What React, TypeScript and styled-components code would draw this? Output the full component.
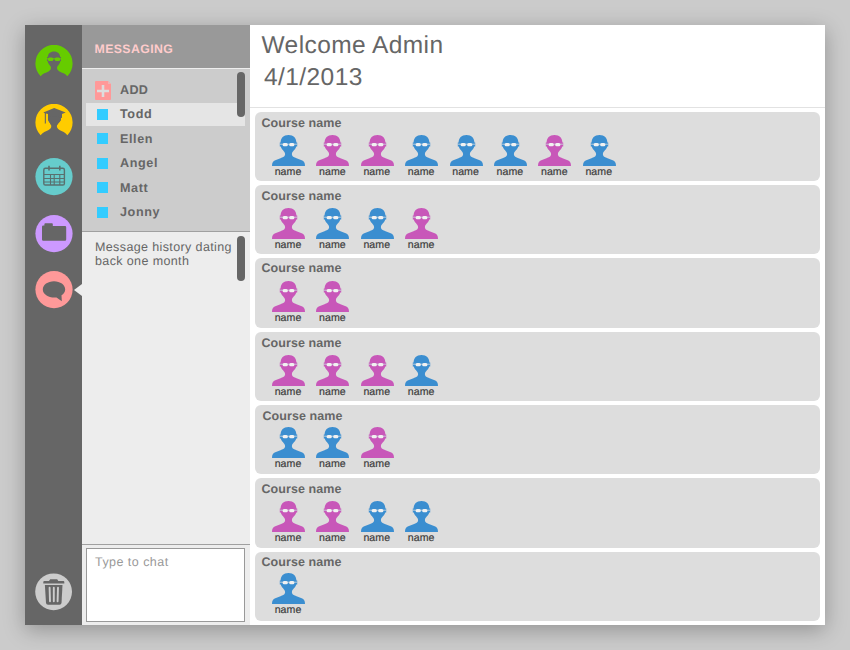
import React from "react";
import styled, { createGlobalStyle } from "styled-components";

const GlobalStyle = createGlobalStyle`
  * { box-sizing: border-box; }
  body {
    margin: 0;
    background: #cbcbcb;
    font-family: "Liberation Sans", Arial, sans-serif;
    color: #666;
    text-rendering: geometricPrecision;
  }
`;

const Page = styled.div`
  width: 850px;
  height: 650px;
  padding: 25px;
  overflow: hidden;
`;

const Window = styled.div`
  display: flex;
  width: 800px;
  height: 600px;
  background: #fff;
  box-shadow: 0 5px 20px rgba(0, 0, 0, 0.28);
`;

const Sidebar = styled.nav`
  position: relative;
  display: flex;
  flex-direction: column;
  width: 57px;
  padding: 19.5px 0 14.5px 10px;
  background: #666;
`;

const NavItem = styled.a<{ $gap: number; $push?: boolean }>`
  display: block;
  width: 38px;
  height: 38px;
  margin-top: ${(p) => (p.$push ? "auto" : `${p.$gap}px`)};
  svg { display: block; }
`;

const ActivePointer = styled.span`
  position: absolute;
  right: 0;
  top: 259px;
  border: 6px solid transparent;
  border-right: 8px solid #ededed;
  border-left: 0;
`;

const Messaging = styled.aside`
  display: flex;
  flex-direction: column;
  width: 168px;
  background: #ededed;
`;

const PanelHeader = styled.h2`
  height: 44px;
  margin: 0;
  padding: 17px 0 0 12.5px;
  background: #999;
  border-bottom: 1px solid #eee;
  color: #fcc;
  font-size: 12.3px;
  line-height: 14px;
  letter-spacing: 0.4px;
`;

const Contacts = styled.div`
  position: relative;
  height: 163px;
  padding: 9.5px 5px 0 4px;
  background: #ccc;
  border-bottom: 1px solid #a0a0a0;
`;

const Contact = styled.div<{ $selected?: boolean }>`
  display: flex;
  align-items: center;
  height: 24.4px;
  padding: 0 0 1.2px 11px;
  font-size: 12.6px;
  font-weight: bold;
  letter-spacing: 0.6px;
  background: ${(p) =>
    p.$selected
      ? "linear-gradient(#e5e5e5, #e5e5e5) 0 0 / 100% 23px no-repeat"
      : "none"};
`;

const Marker = styled.span`
  width: 11px;
  height: 11px;
  margin: 0 12px 0 0;
  background: #3cf;
`;

const AddRow = styled(Contact)`
  padding-left: 9px;
  letter-spacing: 0.3px;
  svg { margin-right: 9px; }
`;

const Scrollbar = styled.span<{ $top: number }>`
  position: absolute;
  top: ${(p) => p.$top}px;
  right: 5px;
  width: 8px;
  height: 45px;
  border-radius: 4px;
  background: #666;
`;

const History = styled.div`
  position: relative;
  flex: 1;
  padding: 7.5px 0 0 13px;
  border-bottom: 1px solid #a0a0a0;
  font-size: 12.5px;
  line-height: 14.5px;
  letter-spacing: 0.38px;
  white-space: nowrap;
`;

const ChatInput = styled.div`
  height: 74px;
  margin: 3px 5px 3px 4px;
  padding: 6px 8px;
  border: 1px solid #999;
  background: #fff;
  color: #999;
  font-size: 12.5px;
  line-height: 15px;
  letter-spacing: 0.46px;
`;

const Main = styled.main`
  flex: 1;
`;

const Welcome = styled.header`
  height: 83px;
  padding: 4.5px 0 0 11.5px;
  border-bottom: 1px solid #e2e2e2;
  font-size: 24.5px;
  line-height: 32px;
  letter-spacing: 0.42px;
`;

const DateLine = styled.div`
  padding-left: 2.5px;
`;

const Courses = styled.div`
  display: flex;
  flex-direction: column;
  gap: 4.05px;
  padding: 3.6px 5px 0 4.5px;
`;

const Card = styled.section<{ $title: number; $inset: number }>`
  height: 69.3px;
  padding: ${(p) => p.$title}px 0 0 ${(p) => p.$inset}px;
  border-radius: 6px;
  background: #ddd;
`;

const CourseTitle = styled.h3`
  height: 14px;
  margin: 0;
  font-size: 12.5px;
  line-height: 14px;
  letter-spacing: 0.08px;
`;

const People = styled.div<{ $top: number; $inset: number }>`
  display: flex;
  gap: 11.4px;
  margin: ${(p) => p.$top}px 0 0 ${(p) => 17.5 - p.$inset}px;
`;

const Student = styled.div`
  width: 33px;
  color: #3d3d3d;
  font-size: 10.6px;
  line-height: 11px;
  letter-spacing: 0.05px;
  text-align: center;
  -webkit-text-stroke: 0.2px #3d3d3d;
  svg { display: block; margin-bottom: 1.3px; }
  span { margin-left: -1px; }
`;

const BUST =
  "M16.5 0C11.4 0 8.7 3 8.6 7.5H7.8V11.6H8.8C9.2 14.5 13 16.5 13.1 19C13.2 21.5 11 22.2 8.5 23.2L3.3 25.3C1 26.2 0 27.5 0 31H33C33 27.5 32 26.2 29.7 25.3L24.5 23.2C22 22.2 19.8 21.5 19.9 19C20 16.5 23.8 14.5 24.2 11.6H25.2V7.5H24.4C24.3 3 21.6 0 16.5 0Z";

const COLORS = { b: "#3b8ed0", p: "#c857b9" };

const StudentIcon = ({ fill }: { fill: string }) => (
  <svg width="33" height="31" viewBox="0 0 33 31">
    <path d={BUST} fill={fill} />
    <path d="M8 9.2H25" stroke="#c5d2dc" strokeWidth="0.9" />
    <g fill="#f1f1f1">
      <rect x="10.6" y="8" width="5.2" height="3.2" rx="1.5" />
      <rect x="17.2" y="8" width="5.2" height="3.2" rx="1.5" />
    </g>
  </svg>
);

const AdminIcon = () => (
  <svg width="38" height="38" viewBox="0 0 38 38">
    <path d="M5.6 31.3A18.6 18.6 0 1 1 32.4 31.3C30.5 28.3 27 27.8 24.5 26.4C21.5 24.8 21.8 22.5 22.5 21.3C23.5 19.8 25.1 18.5 25.4 16H26V12H25.2C25 8.6 22.8 6.4 19 6.4S13 8.6 12.8 12H12V16H12.6C12.9 18.5 14.5 19.8 15.5 21.3C16.2 22.5 16.5 24.8 13.5 26.4C11 27.8 7.5 28.3 5.6 31.3Z" fill="#6c0" />
    <path d="M12 13.8H26" stroke="#6c0" strokeWidth="1" />
    <g fill="#6c0">
      <rect x="12.9" y="12.6" width="5.4" height="3.4" rx="1.5" />
      <rect x="19.7" y="12.6" width="5.4" height="3.4" rx="1.5" />
    </g>
  </svg>
);

const GraduateIcon = () => (
  <svg width="38" height="38" viewBox="0 0 38 38">
    <path d="M5.6 31.3A18.6 18.6 0 1 1 32.4 31.3C30.6 28.3 27 27.5 24.5 26C21.5 24.3 21.6 22 22.3 20.7C23.6 18.8 25.7 17.5 26 15V12H13V15C13.3 17.5 14.9 18.8 15.9 20.7C16.6 22 16.6 24.3 13.6 26C11.1 27.5 7.4 28.3 5.6 31.3Z" fill="#fc0" />
    <path d="M8.3 8.6L19.2 4L30.7 8.6L27 10V14Q19.5 12 13 14V10L10.9 9.5V19.5H9.8V9.2Z" fill="#666" />
    <path d="M13 13.5Q19.5 11.7 26 13.5V15.3C25.6 17.6 23.6 18.8 22.3 20.7H15.9C14.9 18.8 13.3 17.6 13 15.3Z" fill="#666" />
  </svg>
);

const CalendarIcon = () => (
  <svg width="38" height="38" viewBox="0 0 38 38">
    <circle cx="19" cy="18.6" r="18.6" fill="#6cc" />
    <g fill="none" stroke="#59706f" strokeWidth="1.4">
      <rect x="8.8" y="10.3" width="20.6" height="16.7" rx="1.6" />
      <path d="M9 16.5H29M9 20.5H29M9 24H29M15.5 16.5V27M19.2 16.5V27M24.8 16.5V27" strokeWidth="1.1" />
      <path d="M14 7.8V12.5M24.8 7.8V12.5" strokeWidth="1.6" />
    </g>
  </svg>
);

const FolderIcon = () => (
  <svg width="38" height="38" viewBox="0 0 38 38">
    <circle cx="19" cy="18.6" r="18.6" fill="#c9f" />
    <path d="M7 11.7Q7 10.5 8.2 10.5H9.4V9.2Q9.4 8.3 10.3 8.3H17Q17.8 8.3 17.8 9.2V11H30Q31.2 11 31.2 12.2V24.5Q31.2 25.7 30 25.7H8.2Q7 25.7 7 24.5Z" fill="#666" />
  </svg>
);

const ChatIcon = () => (
  <svg width="38" height="38" viewBox="0 0 38 38">
    <circle cx="19" cy="18.6" r="18.6" fill="#f99" />
    <path d="M19 10.3C25.2 10.3 30.2 13.9 30.2 18.4C30.2 21 28.7 22.8 26.5 24.2L26.8 30.3L21.5 26.4C14.3 27.2 7.8 23.5 7.8 18.4C7.8 13.9 12.8 10.3 19 10.3Z" fill="#666" />
  </svg>
);

const TrashIcon = () => (
  <svg width="38" height="38" viewBox="0 0 38 38">
    <circle cx="18.6" cy="18.8" r="18.4" fill="#ccc" />
    <g fill="#666">
      <path d="M9.3 8H14L15.2 6.2H22.2L23.3 8H28.4Q29.3 8 29.3 9V10.6H8.3V9Q8.3 8 9.3 8Z" />
      <path d="M9.9 11.9H27.5L26.5 30Q26.3 31.8 24.5 31.8H13Q11.2 31.8 11 30Z" />
    </g>
    <path d="M14.6 14.7L15 28.3M18.8 14.7V28.3M23 14.7L22.6 28.3" stroke="#ccc" strokeWidth="1.9" strokeLinecap="round" />
  </svg>
);

const AddIcon = () => (
  <svg width="16" height="19" viewBox="0 0 16 19">
    <path d="M1 0H13L16 3V18Q16 19 15 19H1Q0 19 0 18V1Q0 0 1 0Z" fill="#f99" />
    <path d="M13 0V3H16" fill="#eeb5b5" />
    <path d="M8 4V16M2 10H14" stroke="#ddd" strokeWidth="2.6" />
  </svg>
);

const contacts = ["Todd", "Ellen", "Angel", "Matt", "Jonny"];

const courses: { people: ("b" | "p")[]; title: number; top: number; inset: number }[] = [
  { people: ["b", "p", "p", "b", "b", "b", "p", "b"], title: 4.2, top: 5.2, inset: 7 },
  { people: ["p", "b", "b", "p"], title: 3.9, top: 5.2, inset: 7 },
  { people: ["p", "p"], title: 3.2, top: 5.5, inset: 7 },
  { people: ["p", "p", "p", "b"], title: 4.2, top: 5.2, inset: 7 },
  { people: ["b", "b", "p"], title: 3.9, top: 4.1, inset: 8 },
  { people: ["p", "p", "b", "b"], title: 3.5, top: 5.2, inset: 7 },
  { people: ["b"], title: 3.7, top: 3.6, inset: 7 },
];

export default function App() {
  return (
    <>
      <GlobalStyle />
      <Page>
        <Window>
          <Sidebar>
            <NavItem $gap={0}><AdminIcon /></NavItem>
            <NavItem $gap={21.5}><GraduateIcon /></NavItem>
            <NavItem $gap={16}><CalendarIcon /></NavItem>
            <NavItem $gap={19}><FolderIcon /></NavItem>
            <NavItem $gap={18}><ChatIcon /></NavItem>
            <NavItem $gap={0} $push><TrashIcon /></NavItem>
            <ActivePointer />
          </Sidebar>
          <Messaging>
            <PanelHeader>MESSAGING</PanelHeader>
            <Contacts>
              <AddRow><AddIcon />ADD</AddRow>
              {contacts.map((name, i) => (
                <Contact key={name} $selected={i === 0}>
                  <Marker />
                  {name}
                </Contact>
              ))}
              <Scrollbar $top={3} />
            </Contacts>
            <History>
              Message history dating
              <br />
              back one month
              <Scrollbar $top={4} />
            </History>
            <ChatInput>Type to chat</ChatInput>
          </Messaging>
          <Main>
            <Welcome>
              <div>Welcome Admin</div>
              <DateLine>4/1/2013</DateLine>
            </Welcome>
            <Courses>
              {courses.map((course, i) => (
                <Card key={i} $title={course.title} $inset={course.inset}>
                  <CourseTitle>Course name</CourseTitle>
                  <People $top={course.top} $inset={course.inset}>
                    {course.people.map((kind, j) => (
                      <Student key={j}>
                        <StudentIcon fill={COLORS[kind]} />
                        <span>name</span>
                      </Student>
                    ))}
                  </People>
                </Card>
              ))}
            </Courses>
          </Main>
        </Window>
      </Page>
    </>
  );
}
